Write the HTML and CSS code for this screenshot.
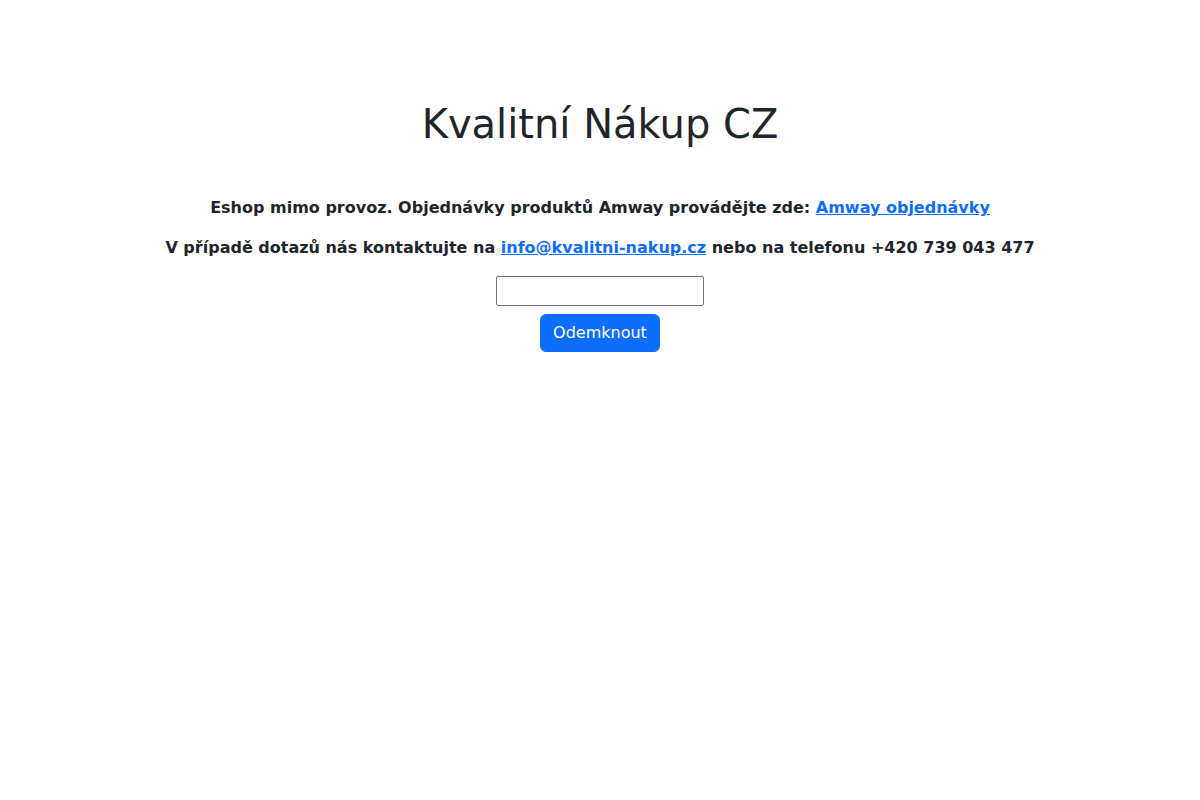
FILE: index.html
```html
<!DOCTYPE html>
<html lang="cs">
<head>
<meta charset="utf-8">
<title>Kvalitní Nákup CZ</title>
<link rel="stylesheet" href="styles.css">
</head>
<body>
<main class="page">
  <h1 class="title">Kvalitní Nákup CZ</h1>
  <p class="note">Eshop mimo provoz. Objednávky produktů Amway provádějte zde: <a href="#" class="link">Amway objednávky</a></p>
  <p class="note">V případě dotazů nás kontaktujte na <a href="#" class="link">info@kvalitni-nakup.cz</a> nebo na telefonu +420 739 043 477</p>
  <form class="unlock">
    <input class="field" type="password">
    <button class="btn" type="button">Odemknout</button>
  </form>
</main>
</body>
</html>
```
FILE: styles.css
```css
html, body {
  margin: 0;
  padding: 0;
  background: #fff;
}
body {
  font-family: "DejaVu Sans", sans-serif;
  font-size: 16px;
  line-height: 1.5;
  color: #212529;
}
.page {
  padding-top: 100px;
  text-align: center;
}
.title {
  margin: 0 0 48px;
  font-size: 40px;
  font-weight: 400;
  line-height: 1.2;
}
.note {
  margin: 0 0 16px;
  font-weight: 700;
}
.link {
  color: #0d6efd;
  text-decoration: underline;
}
.unlock {
  display: flex;
  flex-direction: column;
  align-items: center;
  gap: 8px;
}
.field {
  box-sizing: border-box;
  width: 208px;
  height: 30px;
  border: 1px solid #767676;
  border-radius: 2px;
  padding: 1px 2px;
  font-family: inherit;
  font-size: 16px;
  background: #fff;
}
.btn {
  box-sizing: border-box;
  height: 38px;
  padding: 6px 12px;
  font-family: inherit;
  font-size: 16px;
  line-height: 1.5;
  color: #fff;
  background: #0d6efd;
  border: 1px solid #0d6efd;
  border-radius: 6px;
  cursor: pointer;
}
```
